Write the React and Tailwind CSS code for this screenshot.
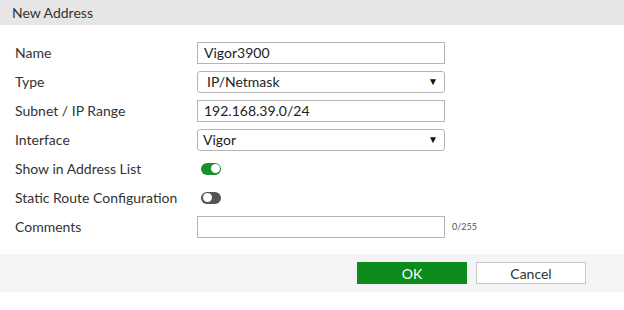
export default function App() {
  const font = { fontFamily: 'Lato, "Noto Sans", sans-serif' };
  const rows = [
    { label: "Name", type: "input", value: "Vigor3900" },
    { label: "Type", type: "select", value: "IP/Netmask", pad: "pl-[9px]" },
    { label: "Subnet / IP Range", type: "input", value: "192.168.39.0/24" },
    { label: "Interface", type: "select", value: "Vigor", pad: "pl-[5px]" },
    { label: "Show in Address List", type: "toggle", on: true },
    { label: "Static Route Configuration", type: "toggle", on: false },
    { label: "Comments", type: "comment" },
  ];
  return (
    <div className="w-[624px] h-[310px] bg-white text-[#333] flex flex-col" style={font}>
      <div className="h-[25px] bg-[#e6e6e6] flex items-center pl-[12px] text-[14px] text-[#333]">
        New Address
      </div>
      <div className="flex flex-col pt-[17px] gap-[8px] h-[229px]">
        {rows.map((r) => (
          <div key={r.label} className="flex items-center h-[21px]">
            <div className="w-[197px] pl-[15px] text-[14px] text-[#333] shrink-0">{r.label}</div>
            {r.type === "input" && (
              <div className="w-[248px] h-[22px] border border-[#b5b5b5] flex items-center pl-[6px] text-[14px] text-[#222]">
                {r.value}
              </div>
            )}
            {r.type === "select" && (
              <div className={`w-[248px] h-[22px] border border-[#b5b5b5] rounded-[3px] flex items-center justify-between ${r.pad} pr-[6px] text-[14px] text-[#222]`}>
                <span>{r.value}</span>
                <span className="text-[10px] text-[#111]">▼</span>
              </div>
            )}
            {r.type === "toggle" && (
              <div
                className={`ml-[4px] w-[20px] h-[12px] rounded-full flex items-center px-[1.5px] ${
                  r.on ? "bg-[#1a8f2a] justify-end" : "bg-[#555] justify-start"
                }`}
              >
                <div className="w-[9px] h-[9px] rounded-full bg-white" />
              </div>
            )}
            {r.type === "comment" && (
              <div className="flex items-center">
                <div className="w-[248px] h-[22px] border border-[#b5b5b5]" />
                <span className="ml-[7px] text-[9px] text-[#555]">0/255</span>
              </div>
            )}
          </div>
        ))}
      </div>
      <div className="h-[38px] bg-[#f4f4f4] flex items-center pl-[357px] gap-[9px]">
        <div className="w-[110px] h-[22px] bg-[#0c8a1c] text-white text-[14px] flex items-center justify-center">
          OK
        </div>
        <div className="w-[110px] h-[22px] bg-white border border-[#c8c8c8] text-[#333] text-[14px] flex items-center justify-center">
          Cancel
        </div>
      </div>
    </div>
  );
}
